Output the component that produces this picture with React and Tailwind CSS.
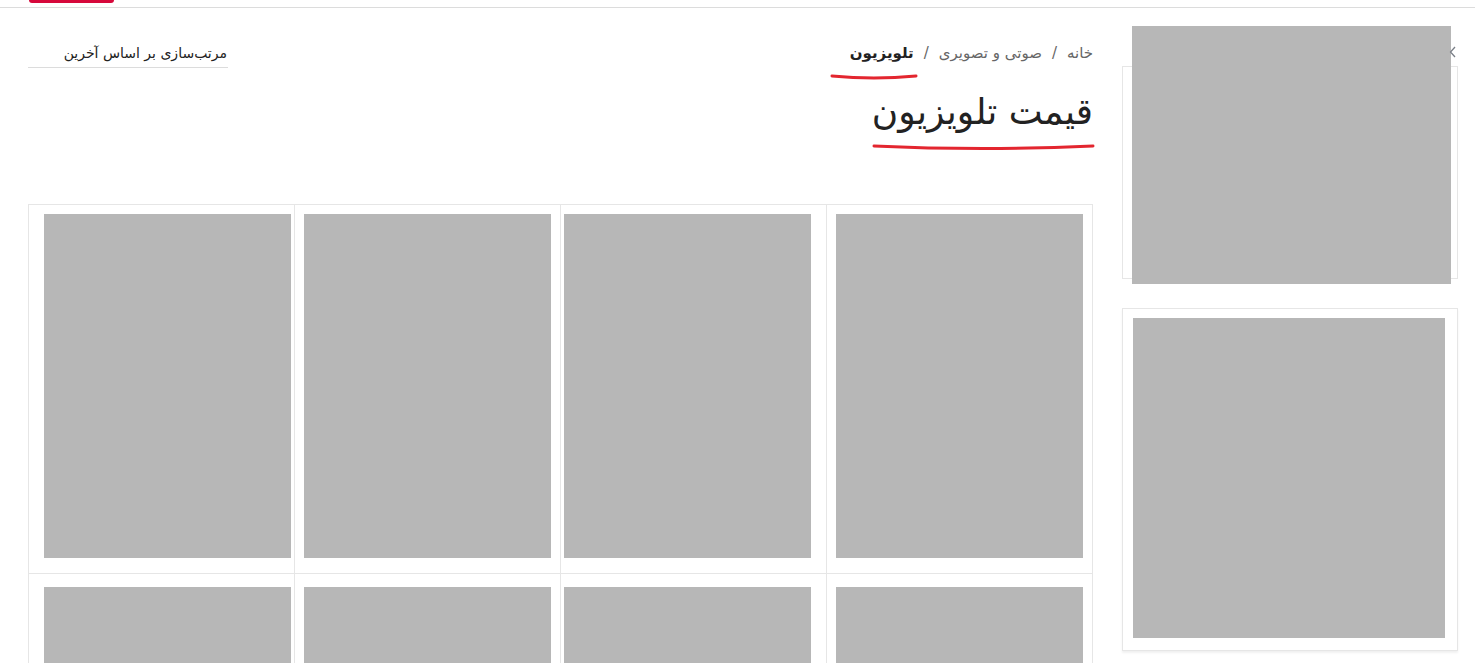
const font = { fontFamily: '"DejaVu Sans", "Noto Sans", sans-serif' }

const offsets = ['ml-[15px]', 'ml-[9px]', 'ml-[3px]', 'ml-[9px]']

function Cell({ i, top }) {
  return (
    <div className="h-[369px] w-[266px] border-b border-r border-[#e6e6e6]">
      <div className={`${offsets[i]} ${top} h-[344px] w-[247px] bg-[#b7b7b7]`} />
    </div>
  )
}

function Wave({ w, h, d }) {
  return (
    <svg width={w} height={h} viewBox={`0 0 ${w} ${h}`} className="block">
      <path d={d} fill="none" stroke="#e3262f" strokeWidth="3" strokeLinecap="round" />
    </svg>
  )
}

export default function App() {
  return (
    <div className="min-h-screen overflow-hidden bg-white text-[#222]" style={font}>
      <div className="h-[8px] border-b border-[#dcdcdc]">
        <div className="ml-[29px] h-[3px] w-[85px] rounded-b-md bg-[#d6083b]" />
      </div>

      <div className="flex pl-[28px]">
        <div className="w-[1065px]">
          <div className="mt-[35px] flex items-start justify-between">
            <div dir="rtl" className="w-[200px] border-b border-[#dcdcdc] pb-[4px] pr-[1px] text-[14px] font-medium leading-[20px]">
              مرتب‌سازی بر اساس آخرین
            </div>
            <div dir="rtl" className="flex items-center gap-[10px] text-[15px] leading-[20px] text-[#666]">
              <span>خانه</span>
              <span>/</span>
              <span>صوتی و تصویری</span>
              <span>/</span>
              <span className="font-bold text-[#222]">تلویزیون</span>
            </div>
          </div>
          <div className="relative h-[0px]">
            <div className="absolute left-[802px] top-[5px]">
              <Wave w={88} h={8} d="M2 3 Q 44 7 86 3" />
            </div>
          </div>

          <div dir="rtl" className="mt-[22px] text-[36px] leading-[44px] text-[#222]">
            قیمت تلویزیون
          </div>
          <div className="ml-[844px] mt-[9px]">
            <Wave w={223} h={10} d="M2 3 Q 110 8 221 3" />
          </div>

          <div className="mt-[51px] grid w-[1065px] grid-cols-4 border-l border-t border-[#e6e6e6]">
            {[0, 1, 2, 3].map((i) => (
              <Cell key={i} i={i} top="mt-[9px]" />
            ))}
            {[0, 1, 2, 3].map((i) => (
              <Cell key={`b${i}`} i={i} top="mt-[13px]" />
            ))}
          </div>
        </div>

        <div className="relative ml-[29px] w-[336px]">
          <div className="relative mt-[58px] h-[213px] border border-[#e6e6e6]">
            <div className="absolute left-[9px] top-[-41px] h-[258px] w-[319px] bg-[#b7b7b7]" />
          </div>
          <div className="absolute left-[327px] top-[38px]">
            <svg width="8" height="12" viewBox="0 0 8 12">
              <path d="M6 1 L1.5 6 L6 11" fill="none" stroke="#7a7f87" strokeWidth="1.3" />
            </svg>
          </div>
          <div className="mt-[29px] h-[343px] border border-[#e6e6e6] shadow-[0_2px_2px_rgba(0,0,0,0.06)]">
            <div className="ml-[10px] mt-[9px] h-[320px] w-[312px] bg-[#b7b7b7]" />
          </div>
        </div>
      </div>
    </div>
  )
}
